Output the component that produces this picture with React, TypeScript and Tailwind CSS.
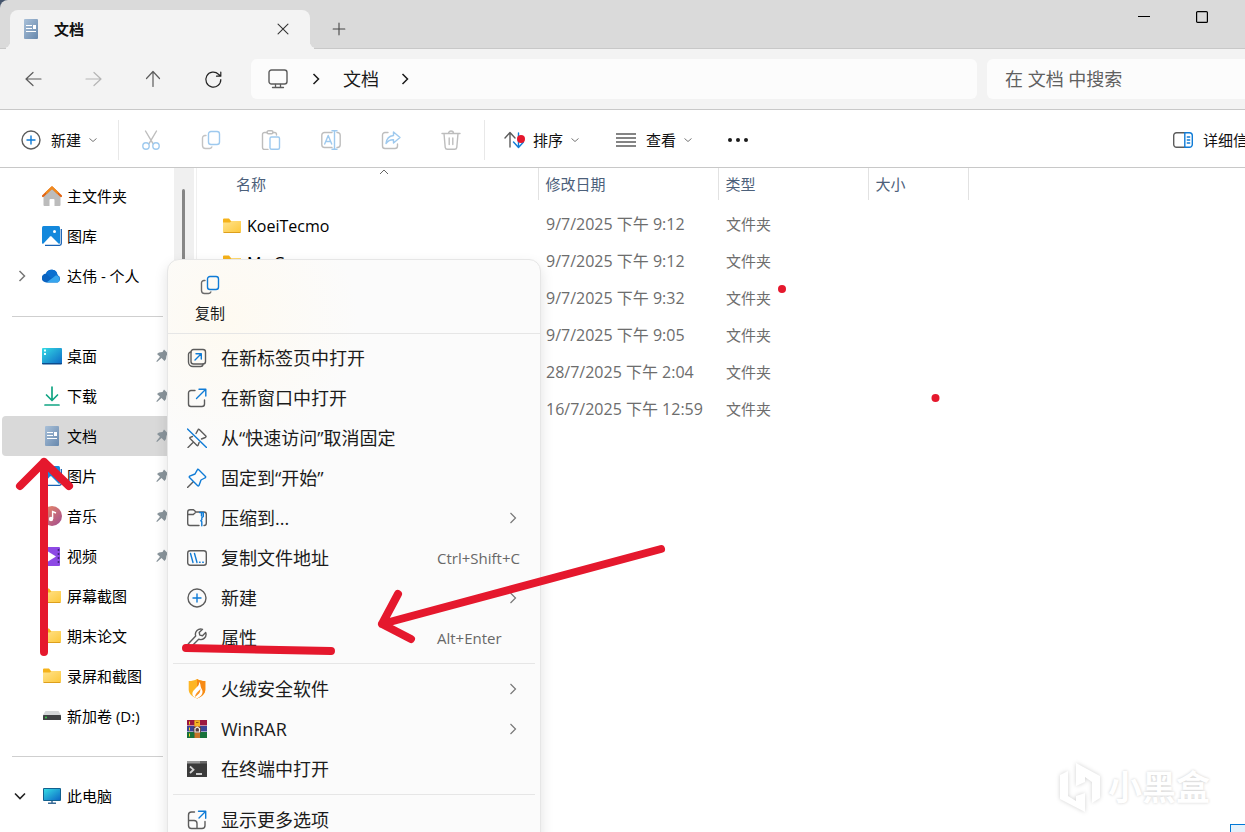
import type { ReactNode } from "react";

type IconProps = {
    children: ReactNode;
    className?: string;
    size?: number;
};

// 20x20 line icon, grey by default, blue parts set their own stroke
function Icon({ children, className = "text-[#5c5c5c]", size = 20 }: IconProps) {
    return (
        <svg
            width={size}
            height={size}
            viewBox="0 0 20 20"
            fill="none"
            stroke="currentColor"
            strokeWidth="1.4"
            strokeLinecap="round"
            strokeLinejoin="round"
            className={`shrink-0 ${className}`}
            aria-hidden="true"
        >
            {children}
        </svg>
    );
}

const BLUE = "#0f7bd6";

function ChevronDown() {
    return (
        <svg width="8" height="8" viewBox="0 0 8 8" fill="none" stroke="#777" className="shrink-0" aria-hidden="true">
            <path d="M.5 2.500l3.500 3 3.500-3" />
        </svg>
    );
}

function ChevronRight({ color = "#1a1a1a", width = 1.5 }) {
    return (
        <svg width="8" height="12" viewBox="0 0 8 12" fill="none" stroke={color} strokeWidth={width} className="shrink-0" aria-hidden="true">
            <path d="M1.5 1L6.500 6l-5 5" />
        </svg>
    );
}

function CopyIcon({ className = "" }) {
    return (
        <Icon className={`text-[#6a6a6a] ${className}`}>
            <path d="M5 5.500H4A2.500 2.500 0 0 0 1.500 8v7.500A3 3 0 0 0 4.500 18.500h4a2.500 2.500 0 0 0 2.300-1.500" />
            <rect x="7.500" y="1.500" width="11" height="13" rx="2.500" stroke={BLUE} />
        </Icon>
    );
}

function CirclePlus() {
    return (
        <Icon>
            <circle cx="10" cy="10" r="9" />
            <path d="M10 6v8M6 10h8" stroke={BLUE} />
        </Icon>
    );
}

function DocIcon() {
    return (
        <svg width="20" height="20" viewBox="0 0 20 20" className="shrink-0" aria-hidden="true">
            <defs>
                <linearGradient id="doc" x1="0" y1="0" x2="1" y2="1">
                    <stop offset="0" stopColor="#a9c0d8" />
                    <stop offset="1" stopColor="#6788ad" />
                </linearGradient>
            </defs>
            <rect x="3" width="14" height="20" rx="1" fill="url(#doc)" />
            <path d="M5 6.500h6M5 9.500h6M5 12.500h10" stroke="#fff" strokeWidth="1.200" />
            <path d="M12 6h3v4h-3z" fill="#fff" />
        </svg>
    );
}

function FolderIcon() {
    return (
        <svg width="20" height="20" viewBox="0 0 20 20" className="shrink-0" aria-hidden="true">
            <defs>
                <linearGradient id="folder" x1="0" y1="0" x2="1" y2="1">
                    <stop offset="0" stopColor="#ffe38e" />
                    <stop offset="1" stopColor="#fdc83b" />
                </linearGradient>
            </defs>
            <path d="M1 3.500a1 1 0 0 1 1-1h5l2 2.500h9a1 1 0 0 1 1 1v3H1z" fill="#f5b21a" />
            <path d="M1 6.500h7L9.500 5H19v10.500a1 1 0 0 1-1 1H2a1 1 0 0 1-1-1z" fill="url(#folder)" />
            <path d="M1.500 16.500h17" stroke="#dd9f1c" />
        </svg>
    );
}

function HomeIcon() {
    return (
        <svg width="20" height="20" viewBox="0 0 20 20" className="shrink-0" aria-hidden="true">
            <path d="M1.500 9.500L10 2l8.500 7.500V19a1 1 0 0 1-1 1h-5v-6a1 1 0 0 0-1-1h-3a1 1 0 0 0-1 1v6h-5a1 1 0 0 1-1-1z" fill="#bcbcbc" />
            <path d="M1 10l9-8.500L19 10" fill="none" stroke="#e2620f" strokeWidth="2.200" strokeLinecap="round" strokeLinejoin="round" />
            <path d="M4 7.200l6-5.700 6 5.700" fill="none" stroke="#f08a1d" strokeWidth="2.200" strokeLinejoin="round" />
        </svg>
    );
}

function PictureIcon() {
    return (
        <svg width="20" height="20" viewBox="0 0 20 20" className="shrink-0" aria-hidden="true">
            <path d="M3 19.300h14.500a1.800 1.800 0 0 0 1.800-1.800V3" fill="none" stroke="#1762b4" strokeWidth="1.300" />
            <rect width="18" height="18" rx="1.500" fill="#1388dc" />
            <path d="M1 18l7-7.500c.5-.5 1-.5 1.500 0l7.500 7.500z" fill="#fff" />
            <circle cx="12.500" cy="5.500" r="1.500" fill="#fff" />
        </svg>
    );
}

function CloudIcon() {
    return (
        <svg width="20" height="20" viewBox="0 0 20 20" className="shrink-0" aria-hidden="true">
            <path d="M4.500 16.500a4.500 4.500 0 0 1-.5-9 6 6 0 0 1 11.500 1.500 4 4 0 0 1 0 7.500z" fill="#0a63c0" />
            <path d="M4 7.500a6 6 0 0 1 11.500 1.500L9 12z" fill="#0b6fd0" />
            <path d="M4.500 16.500L14 9.300a4 4 0 0 1 2 7.200z" fill="#36a5ee" />
        </svg>
    );
}

function DesktopIcon() {
    return (
        <svg width="20" height="20" viewBox="0 0 20 20" className="shrink-0" aria-hidden="true">
            <defs>
                <linearGradient id="desk" x1="0" y1="0" x2="1" y2="1">
                    <stop offset="0" stopColor="#34dbe4" />
                    <stop offset="1" stopColor="#0d69c6" />
                </linearGradient>
            </defs>
            <rect y="2" width="20" height="16" rx="1" fill="url(#desk)" />
            <path d="M2 4.500h2M2 8h2" stroke="#e4ffff" strokeWidth="2" />
            <path d="M0 17h20v.500a1 1 0 0 1-1 1H1a1 1 0 0 1-1-1z" fill="#0c4b8c" />
        </svg>
    );
}

function DownloadIcon() {
    return (
        <Icon className="text-[#12a584]">
            <path d="M10 1v13M4.500 9l5.500 5.500L15.500 9M3 19h14" strokeWidth="1.700" />
        </Icon>
    );
}

function MusicIcon() {
    return (
        <svg width="20" height="20" viewBox="0 0 20 20" className="shrink-0" aria-hidden="true">
            <defs>
                <linearGradient id="music" x1="0" y1="0" x2="1" y2="1">
                    <stop offset="0" stopColor="#ee8d63" />
                    <stop offset="1" stopColor="#a04a90" />
                </linearGradient>
            </defs>
            <circle cx="10" cy="10" r="10" fill="url(#music)" />
            <circle cx="9" cy="13" r="2.200" fill="#fff" />
            <path d="M10.600 13V5.500l3.400 1.500" fill="none" stroke="#fff" strokeWidth="1.400" />
        </svg>
    );
}

function VideoIcon() {
    return (
        <svg width="20" height="20" viewBox="0 0 20 20" className="shrink-0" aria-hidden="true">
            <rect x="1" y="1" width="17" height="19" rx="1" fill="#8d49e4" />
            <path d="M6 5.500l8 5-8 5z" fill="#fff" />
            <path d="M16.500 3v15" stroke="#42257a" strokeWidth="1.600" strokeDasharray="2 2" />
        </svg>
    );
}

function DriveIcon() {
    return (
        <svg width="20" height="20" viewBox="0 0 20 20" className="shrink-0" aria-hidden="true">
            <path d="M3.500 5h13L19 9H1z" fill="#d5d7d9" />
            <rect x="1" y="9" width="18" height="5" rx=".5" fill="#3f4143" />
            <circle cx="4" cy="11.500" r=".9" fill="#3ddc4e" />
        </svg>
    );
}

function PcIcon() {
    return (
        <svg width="20" height="20" viewBox="0 0 20 20" className="shrink-0" aria-hidden="true">
            <path d="M10 14v3M6 17.300h8" stroke="#3a6b96" strokeWidth="1.500" />
            <rect x="1" y="2" width="18" height="13" rx="1" fill="#12608f" />
            <rect x="2" y="3" width="16" height="11" fill="url(#desk)" />
        </svg>
    );
}

function PinnedIcon() {
    return (
        <svg width="12" height="14" viewBox="0 0 12 14" className="shrink-0" aria-hidden="true">
            <path d="M8 .5L12.500 5l-2 1.500-.5 3.500-1.500 2-3-3L1 13l-.7-.7L4 7.800 1 5l2-1.500L6.500 3z" fill="#8a959c" />
        </svg>
    );
}

const homeItems = [
    { label: "主文件夹", icon: <HomeIcon /> },
    { label: "图库", icon: <PictureIcon /> },
    { label: "达伟 - 个人", icon: <CloudIcon />, expandable: true },
];

const quickItems = [
    { label: "桌面", icon: <DesktopIcon />, pinned: true },
    { label: "下载", icon: <DownloadIcon />, pinned: true },
    { label: "文档", icon: <DocIcon />, pinned: true, selected: true },
    { label: "图片", icon: <PictureIcon />, pinned: true },
    { label: "音乐", icon: <MusicIcon />, pinned: true },
    { label: "视频", icon: <VideoIcon />, pinned: true },
    { label: "屏幕截图", icon: <FolderIcon /> },
    { label: "期末论文", icon: <FolderIcon /> },
    { label: "录屏和截图", icon: <FolderIcon /> },
    { label: "新加卷 (D:)", icon: <DriveIcon /> },
];

type SideItem = {
    label: string;
    icon: ReactNode;
    pinned?: boolean;
    selected?: boolean;
    expandable?: boolean;
    expanded?: boolean;
};

function SideRow({ label, icon, pinned, selected, expandable, expanded }: SideItem) {
    return (
        <li>
            <a
                href="#"
                className={`flex h-10 items-center rounded-l-sm pr-1.5 pl-4 text-[15px] leading-5 text-black ${selected ? "bg-[#d9d9d9]" : ""}`}
            >
                <span className="flex w-6 shrink-0">
                    {expandable && <ChevronRight color="#777" />}
                    {expanded && (
                        <svg width="12" height="8" viewBox="0 0 12 8" fill="none" stroke="#222" strokeWidth="1.600" className="-ml-1" aria-hidden="true">
                            <path d="M1 1.500l5 5 5-5" />
                        </svg>
                    )}
                </span>
                {icon}
                <span className="ml-[5px] flex-1 whitespace-nowrap">{label}</span>
                {pinned && <PinnedIcon />}
            </a>
        </li>
    );
}

const files = [
    { name: "KoeiTecmo", date: "9/7/2025 下午 9:12" },
    { name: "My Games", date: "9/7/2025 下午 9:12" },
    { name: "", date: "9/7/2025 下午 9:32" },
    { name: "", date: "9/7/2025 下午 9:05" },
    { name: "", date: "28/7/2025 下午 2:04" },
    { name: "", date: "16/7/2025 下午 12:59" },
];

type MenuItem = {
    label: string;
    icon: ReactNode;
    shortcut?: string;
    submenu?: boolean;
};

const shellItems: MenuItem[] = [
    {
        label: "在新标签页中打开",
        icon: (
            <Icon>
                <rect x="4" y="1.500" width="14.500" height="14.500" rx="2.500" />
                <path d="M4 4a2.500 2.500 0 0 0-2.500 2.500V14A4.500 4.500 0 0 0 6 18.500h7.500A2.500 2.500 0 0 0 16 16" />
                <path d="M8 12l6-6M9 5.700h5.300V11" stroke={BLUE} />
            </Icon>
        ),
    },
    {
        label: "在新窗口中打开",
        icon: (
            <Icon>
                <path d="M8 2.500H4A2.500 2.500 0 0 0 1.500 5v11A2.500 2.500 0 0 0 4 18.500h11a2.500 2.500 0 0 0 2.500-2.500v-4" />
                <path d="M9.500 10.500l9-9M12 1.200h6.800V8" stroke={BLUE} />
            </Icon>
        ),
    },
    {
        label: "从“快速访问”取消固定",
        icon: (
            <Icon>
                <path d="M9 5.500l2-3.700c.3-.6.800-.7 1.300-.3l6.500 6.500c.5.600.2 1.200-.5 1.500L14.500 11M5.500 8.500l-2.300.9c-.5.300-.6.700-.2 1.100l7 7c.5.400.9.300 1.100-.2l1-2.800M6.500 14L1 19.500" />
                <path d="M.5 1l19 18.500" stroke={BLUE} />
            </Icon>
        ),
    },
    {
        label: "固定到“开始”",
        icon: (
            <Icon>
                <path d="M6 14l-5.500 5.500" />
                <path d="M11.500 1.500l7 7c.5.700 0 1.300-.7 1.500L14 12l-2 5.500c-.3.600-.9.600-1.300.2L2.500 9.500c-.4-.5-.3-1 .2-1.300L8 6l2.300-4.200c.3-.6.800-.7 1.200-.3z" stroke={BLUE} />
            </Icon>
        ),
    },
    {
        label: "压缩到...",
        icon: (
            <Icon>
                <path d="M12 17.500H3A2.300 2.300 0 0 1 .7 15.200V4A2.300 2.300 0 0 1 3 1.700h3.500L9 4h8a2.300 2.300 0 0 1 2.300 2.300v8.900a2.300 2.300 0 0 1-2.300 2.300M.8 6.500h5.500L9 4" />
                <path d="M12.700 4.500h3.600v4l-1.500 1.200v2l-1 1 1 1v4M14.500 5v3" stroke={BLUE} />
            </Icon>
        ),
        submenu: true,
    },
    {
        label: "复制文件地址",
        icon: (
            <Icon>
                <rect x=".7" y="2.700" width="18.600" height="14.600" rx="2.500" />
                <path d="M3.500 5.500l2.500 9M7.500 5.500l2.500 9M12.500 14.200h.6M15.700 14.200h.6" stroke={BLUE} />
            </Icon>
        ),
        shortcut: "Ctrl+Shift+C",
    },
    { label: "新建", icon: <CirclePlus />, submenu: true },
    {
        label: "属性",
        icon: (
            <Icon>
                <path d="M15.500 1.300a5.300 5.300 0 0 0-6.800 6.700L1.600 15.600a2 2 0 0 0 2.800 2.900l7.300-7.300a5.300 5.300 0 0 0 7-6.700l-3.200 3.200-2.700-.600-.600-2.600z" />
            </Icon>
        ),
        shortcut: "Alt+Enter",
    },
];

const appItems: MenuItem[] = [
    {
        label: "火绒安全软件",
        icon: (
            <svg width="20" height="20" viewBox="0 0 20 20" className="shrink-0" aria-hidden="true">
                <path d="M10 0c2.500 1.500 5 2 8.300 2v8.500c0 4-3.500 7.500-8.300 9-4.800-1.500-8.300-5-8.300-9V2C5 2 7.500 1.500 10 0z" fill="#fdb524" />
                <path d="M10 0c2.500 1.500 5 2 8.300 2v8.500c0 4-3.500 7.500-8.300 9z" fill="#f78a14" />
                <path d="M12 3c.5 3-1 4-3.500 6.500S4.500 13.500 6 17c1.200 1 2.500 1.800 4 2.300 3.500-1.300 5.800-4 5.500-7-.2-2-1.500-2.800-1.800-4.800S13.500 4.500 12 3z" fill="#fff" />
                <path d="M13.300 9.500c-.5 2.500-5 4-5.300 8.500 2.500-2 6-4 5.300-8.500z" fill="#fb9420" />
            </svg>
        ),
        submenu: true,
    },
    {
        label: "WinRAR",
        icon: (
            <svg width="20" height="20" viewBox="0 0 20 20" className="shrink-0" aria-hidden="true">
                <path d="M0 1h20v5.500H0z" fill="#9c1740" />
                <path d="M0 7h20v5.500H0z" fill="#3c4396" />
                <path d="M0 13h20v6H0z" fill="#17713a" />
                <path d="M2.500 2.500v3M2.500 8.500v3M2.500 14.500v3" stroke="#f4d21f" />
                <path d="M7.500 1h5.500v18H7.500z" fill="#c8742a" />
                <path d="M7.500 1.500h5.500V7H7.500z" fill="#f5b323" />
                <path d="M9 3.500h2.500" stroke="#9a5a10" />
                <path d="M6.500 8h7.500v5.500H6.500z" fill="#5a3a3a" />
                <path d="M8 13V9.500L10.200 8l2.300 1.500V13z" fill="none" stroke="#f0eee6" strokeWidth="1.200" />
            </svg>
        ),
        submenu: true,
    },
    {
        label: "在终端中打开",
        icon: (
            <svg width="20" height="20" viewBox="0 0 20 20" className="shrink-0" aria-hidden="true">
                <rect y="2" width="20" height="16" rx=".5" fill="#3b3b3b" />
                <path d="M0 2h13.500v2.500H0z" fill="#9a9a9a" />
                <path d="M13.500 2H20v2.500h-6.500z" fill="#6a6a6a" />
                <path d="M3 7.500l3.500 3.200L3 14" fill="none" stroke="#d4d4d4" strokeWidth="1.800" />
                <path d="M9 15h6" stroke="#fff" strokeWidth="1.500" />
            </svg>
        ),
    },
];

function MenuRow({ label, icon, shortcut, submenu }: MenuItem) {
    return (
        <li>
            <button type="button" className="flex h-10 w-full items-center gap-3.5 pr-[19px] pl-[19px] text-left">
                {icon}
                <span className="flex-1 text-lg leading-6 text-[#1b1b1b]">{label}</span>
                {shortcut && <span className="w-[84px] text-[15px] leading-5 whitespace-nowrap text-[#686868]">{shortcut}</span>}
                {submenu && (
                    <span className="pr-1">
                        <ChevronRight color="#777" width={1.2} />
                    </span>
                )}
            </button>
        </li>
    );
}

function ContextMenu() {
    return (
        <div className="absolute top-[91px] left-[167px] w-[374px] rounded-xl border border-[#e6e6e6] bg-[#fbfbfb] bg-[radial-gradient(circle_at_60px_60px,#fefaf1_0,#fbfbfb_130px)] shadow-[0_6px_14px_rgba(0,0,0,0.12)]">
            <div className="border-b border-[#e6e6e6] px-[15px] pt-[15px] pb-2">
                <button type="button" className="flex w-[54px] flex-col items-center gap-1.5">
                    <CopyIcon />
                    <span className="text-[15px] leading-6 text-[#1b1b1b]">复制</span>
                </button>
            </div>
            <ul className="pt-1">
                {shellItems.map((item) => (
                    <MenuRow key={item.label} {...item} />
                ))}
            </ul>
            <hr className="mx-[5px] my-[5px] border-[#e6e6e6]" />
            <ul>
                {appItems.map((item) => (
                    <MenuRow key={item.label} {...item} />
                ))}
            </ul>
            <hr className="mx-[5px] my-[5px] border-[#e6e6e6]" />
            <ul className="pb-1">
                <MenuRow
                    label="显示更多选项"
                    icon={
                        <Icon>
                            <path d="M7.500 2H4.500A3 3 0 0 0 1.500 5v10.500a3 3 0 0 0 3 3H15a3 3 0 0 0 3-3v-4M1.500 10.500H7a3 3 0 0 1 3 3v5" />
                            <path d="M12 8l6.500-6.500M11.500 1.300h7.200v7" stroke={BLUE} />
                        </Icon>
                    }
                />
            </ul>
        </div>
    );
}

function TitleBar() {
    return (
        <header className="flex h-[49px] items-end justify-between rounded-tl-lg border-b border-[#c8c8c8] bg-[#dadada]">
            <div className="flex items-end pl-2.5">
                <div className="relative -mb-px flex h-[39px] w-[300px] items-center rounded-t-lg bg-[#f3f3f3] pr-[18px] pb-px pl-[11px] before:absolute before:bottom-px before:-left-1.5 before:size-1.5 before:rounded-br-md before:shadow-[2px_2px_0_#f3f3f3] after:absolute after:-right-1.5 after:bottom-px after:size-1.5 after:rounded-bl-md after:shadow-[-2px_2px_0_#f3f3f3]">
                    <DocIcon />
                    <h1 className="ml-[13px] flex-1 text-[15px] leading-5 font-bold text-[#111]">文档</h1>
                    <button type="button" aria-label="关闭">
                        <Icon size={18} className="text-[#333]">
                            <path d="M4.500 4.500l11 11M15.500 4.500l-11 11" strokeWidth="1.200" />
                        </Icon>
                    </button>
                </div>
                <button type="button" className="flex size-[38px] items-center justify-center pl-5" aria-label="新标签">
                    <Icon size={18} className="text-[#444]">
                        <path d="M10 3.500v13M3.500 10h13" strokeWidth="1.200" />
                    </Icon>
                </button>
            </div>
            <div className="flex gap-[46px] self-start pt-[11px] pr-[37px]">
                <button type="button" aria-label="最小化">
                    <svg width="12" height="12" aria-hidden="true">
                        <path d="M0 5.500h12" stroke="#000" />
                    </svg>
                </button>
                <button type="button" aria-label="最大化">
                    <svg width="12" height="12" fill="none" aria-hidden="true">
                        <rect x=".6" y=".6" width="10.800" height="10.800" rx="1" stroke="#000" strokeWidth="1.200" />
                    </svg>
                </button>
            </div>
        </header>
    );
}

function NavBar() {
    return (
        <nav className="flex h-[61px] items-center border-b border-[#c8c8c8] bg-[#f3f3f3] pl-[3px]">
            <button type="button" className="flex w-[60px] justify-center" aria-label="后退">
                <Icon>
                    <path d="M18 10H3.500M10 3.500L3 10l7 6.500" strokeWidth="1.200" />
                </Icon>
            </button>
            <button type="button" className="flex w-[60px] justify-center" aria-label="前进">
                <Icon className="text-[#b5b5b5]">
                    <path d="M3 10h14.500M11 3.500l7 6.500-7 6.500" strokeWidth="1.200" />
                </Icon>
            </button>
            <button type="button" className="flex w-[60px] justify-center" aria-label="向上">
                <Icon>
                    <path d="M10 17.500V3M3.500 9.500L10 2.500l6.500 7" strokeWidth="1.200" />
                </Icon>
            </button>
            <button type="button" className="flex w-[60px] justify-center" aria-label="刷新">
                <Icon className="text-[#222]">
                    <path d="M17.800 10.500A7.500 7.500 0 1 1 15.500 5.200L17.500 7M17.800 3v4.200h-4.300" strokeWidth="1.200" />
                </Icon>
            </button>

            {/* ADDRESS */}
            <div className="ml-2 flex h-10 flex-1 items-center rounded-md bg-[#fcfcfc] pl-[17px]">
                <Icon>
                    <rect x="1" y="1" width="18" height="14" rx="2.500" strokeWidth="1.400" />
                    <path d="M7.500 15.500v2.500M12.500 15.500v2.500M4.500 18.500h11" strokeWidth="1.300" />
                </Icon>
                <span className="ml-6">
                    <ChevronRight />
                </span>
                <a href="#" className="mr-[22px] ml-[23px] text-lg leading-6 text-[#1b1b1b]">文档</a>
                <ChevronRight />
            </div>

            {/* SEARCH */}
            <input
                type="text"
                aria-label="搜索"
                placeholder="在 文档 中搜索"
                className="ml-2.5 h-10 w-[258px] rounded-l-md bg-[#fcfcfc] pl-[18px] text-lg outline-none placeholder:text-[#606060]"
            />
        </nav>
    );
}

function Toolbar() {
    return (
        <div className="flex h-[58px] items-center border-b border-[#c8c8c8] bg-white pt-0.5 text-[15px] leading-5 text-[#111]">
            <button type="button" className="flex w-[118px] shrink-0 items-center pl-[21px]">
                <CirclePlus />
                <span className="mr-2 ml-2.5">新建</span>
                <ChevronDown />
            </button>

            {/* DISABLED ACTIONS */}
            <div className="flex h-10 shrink-0 items-center border-x border-[#e8e8e8] px-0.5 pr-[3px]">
                <button type="button" disabled className="flex w-[60px] justify-center opacity-40" aria-label="剪切">
                    <Icon>
                        <path d="M4.500 1l7.500 12.700M15.500 1L8 13.700" />
                        <circle cx="5" cy="16" r="3.200" stroke={BLUE} />
                        <circle cx="15" cy="16" r="3.200" stroke={BLUE} />
                    </Icon>
                </button>
                <button type="button" disabled className="flex w-[60px] justify-center opacity-40" aria-label="复制">
                    <CopyIcon />
                </button>
                <button type="button" disabled className="flex w-[60px] justify-center opacity-40" aria-label="粘贴">
                    <Icon>
                        <path d="M6 2.500H3.500A2 2 0 0 0 1.500 4.500v13a2 2 0 0 0 2 2H7M12 2.500h1.500a2 2 0 0 1 2 2V5" />
                        <rect x="6" y=".7" width="6" height="3" rx="1.500" />
                        <rect x="9" y="7" width="9.500" height="12.300" rx="1.500" stroke={BLUE} />
                    </Icon>
                </button>
                <button type="button" disabled className="flex w-[60px] justify-center opacity-40" aria-label="重命名">
                    <Icon>
                        <path d="M11 2.500H3.500A2.700 2.700 0 0 0 .8 5.200v9.600a2.700 2.700 0 0 0 2.700 2.700H11M16 2.500h.500a2.700 2.700 0 0 1 2.700 2.700v9.600a2.700 2.700 0 0 1-2.700 2.700H16" />
                        <path d="M3.700 14l3.500-8.500 3.500 8.500M5 11.500h4.500M13.500 1v18M11 .7h5M11 19.300h5" stroke={BLUE} />
                    </Icon>
                </button>
                <button type="button" disabled className="flex w-[60px] justify-center opacity-40" aria-label="共享">
                    <Icon>
                        <path d="M7 2.500H4A2.500 2.500 0 0 0 1.500 5v11A2.500 2.500 0 0 0 4 18.500h10a2.500 2.500 0 0 0 2.500-2.500v-2" />
                        <path d="M12.500 2l6.500 5.500-6.500 5.500V9.800c-3.500-.2-5.500 1-7.500 3.700.500-4.500 3-7.500 7.500-8z" stroke={BLUE} />
                    </Icon>
                </button>
                <button type="button" disabled className="flex w-[60px] justify-center opacity-40" aria-label="删除">
                    <Icon>
                        <path d="M1 3.500h18M7.500 3.500a2.500 2.500 0 0 1 5 0M3 3.500l1.200 13.800a2.300 2.300 0 0 0 2.300 2h7a2.300 2.300 0 0 0 2.300-2L17 3.500M8.200 8v6.500M11.800 8v6.500" />
                    </Icon>
                </button>
            </div>

            <button type="button" className="ml-[19px] flex shrink-0 items-center">
                <Icon>
                    <path d="M6 17V3M1 8l5-5.500L11 8" />
                    <path d="M14.500 3v14M9.500 12l5 5.500 5-5.500" stroke={BLUE} />
                </Icon>
                <span className="mr-2 ml-[9px]">排序</span>
                <ChevronDown />
            </button>
            <button type="button" className="ml-[37px] flex shrink-0 items-center">
                <Icon>
                    <path d="M0 4h20M0 8h20M0 12h20M0 16h20" />
                </Icon>
                <span className="mr-2 ml-2.5">查看</span>
                <ChevronDown />
            </button>
            <button type="button" className="ml-[35px] shrink-0" aria-label="更多">
                <svg width="22" height="20" fill="#1b1b1b" aria-hidden="true">
                    <circle cx="3" cy="10" r="2" />
                    <circle cx="11" cy="10" r="2" />
                    <circle cx="19" cy="10" r="2" />
                </svg>
            </button>
            <button type="button" className="ml-auto flex w-[72px] shrink-0 items-center gap-2.5 whitespace-nowrap">
                <Icon>
                    <path d="M11.500 2.700h-8A2.800 2.800 0 0 0 .7 5.500v9a2.800 2.800 0 0 0 2.800 2.800h8" />
                    <path d="M11.800 2.700h4.700a2.800 2.800 0 0 1 2.800 2.800v9a2.800 2.800 0 0 1-2.800 2.800h-4.700zM14.300 7h2.400M14.300 10h2.400M14.300 13h2.400" stroke={BLUE} />
                </Icon>
                <span>详细信息</span>
            </button>
        </div>
    );
}

function Sidebar() {
    return (
        <aside className="flex w-[197px] shrink-0 border-r border-[#f0f0f0]">
            <div className="w-[174px] pt-2 pl-0.5">
                <ul>
                    {homeItems.map((item) => (
                        <SideRow key={item.label} {...item} />
                    ))}
                </ul>
                <hr className="mt-5 mr-[11px] mb-[19px] ml-2.5 border-[#cfcfcf]" />
                <ul>
                    {quickItems.map((item) => (
                        <SideRow key={item.label} {...item} />
                    ))}
                </ul>
                <hr className="mt-5 mr-[11px] mb-[19px] ml-2.5 border-[#cfcfcf]" />
                <ul>
                    <SideRow label="此电脑" icon={<PcIcon />} expanded />
                </ul>
            </div>
            <div className="w-5 bg-[#f0f0f0] pt-[21px] pl-2">
                <div className="h-64 w-[3px] rounded-full bg-[#868686]"></div>
            </div>
        </aside>
    );
}

function FileTable() {
    return (
        <div className="min-w-0 flex-1">
            <table className="table-fixed text-left text-[15px] leading-5">
                <colgroup>
                    <col className="w-[341px]" />
                    <col className="w-[180px]" />
                    <col className="w-[150px]" />
                    <col className="w-[100px]" />
                </colgroup>
                <thead className="text-[#4c607a]">
                    <tr className="h-8">
                        <th className="relative border-r border-[#e2e2e2] pl-[39px] font-normal">
                            名称
                            <svg width="10" height="6" fill="none" stroke="#666" className="absolute top-px left-[182px]" aria-hidden="true">
                                <path d="M1 5l4-4 4 4" />
                            </svg>
                        </th>
                        <th className="border-r border-[#e2e2e2] pl-[7px] font-normal">修改日期</th>
                        <th className="border-r border-[#e2e2e2] pl-[7px] font-normal">类型</th>
                        <th className="border-r border-[#e2e2e2] pl-[7px] font-normal">大小</th>
                    </tr>
                </thead>
                <tbody className="text-[#6d6d6d] before:block before:h-[5px]">
                    {files.map((file, i) => (
                        <tr key={i} className="h-[37px]">
                            <td className="pt-1 pl-[25px] text-base leading-5 text-black">
                                {file.name && (
                                    <span className="flex items-start gap-[5px]">
                                        <FolderIcon />
                                        {file.name}
                                    </span>
                                )}
                            </td>
                            <td className="pl-2 text-base leading-5 whitespace-nowrap">{file.date}</td>
                            <td className="pl-2">文件夹</td>
                            <td></td>
                        </tr>
                    ))}
                </tbody>
            </table>
        </div>
    );
}

// hand drawn arrows, underline and dots on top of the window
function Marks() {
    return (
        <svg
            className="pointer-events-none absolute inset-0 h-full w-full"
            fill="none"
            stroke="#e5182d"
            strokeWidth="8"
            strokeLinecap="round"
            strokeLinejoin="round"
            aria-hidden="true"
        >
            <path d="M44 652V462M20 486l24-24 25 24" />
            <path d="M186 648l145 3" />
            <path d="M661 549l-279 75M398 594l-16 30 29 15" />
            <g fill="#e5182d" stroke="none">
                <circle cx="521" cy="139" r="4" />
                <circle cx="782" cy="289" r="4" />
                <circle cx="935.500" cy="398" r="4" />
            </g>
        </svg>
    );
}

function Watermark() {
    return (
        <div className="pointer-events-none absolute right-[35px] bottom-[19px] flex items-center gap-1.5">
            <svg width="44" height="52" viewBox="0 0 44 52" fill="#fff" className="drop-shadow-[0_0_2px_rgba(0,0,0,0.18)]" aria-hidden="true">
                <path d="M10 10L2 14v24l25 13V32l-9 3v5l-8-5z" />
                <path d="M18 2l24 13v22l-8 5V21l-7-5v5l-9 4z" />
            </svg>
            <span className="text-[34px] leading-[52px] font-bold text-white [text-shadow:0_0_3px_rgba(0,0,0,0.2)]">小黑盒</span>
        </div>
    );
}

export default function App() {
    return (
        <div className="relative flex h-screen flex-col overflow-hidden bg-slate-600 font-['Open_Sans','Noto_Sans_CJK_SC',sans-serif]">
            <TitleBar />
            <NavBar />
            <Toolbar />

            <main className="relative flex min-h-0 flex-1 bg-white">
                <Sidebar />
                <FileTable />
                <ContextMenu />
            </main>

            <Watermark />
            <div className="absolute right-0 bottom-0 h-2 w-[15px] border-t border-l border-[#0078d7] bg-[#e5f1fb]"></div>
            <Marks />
        </div>
    );
}
